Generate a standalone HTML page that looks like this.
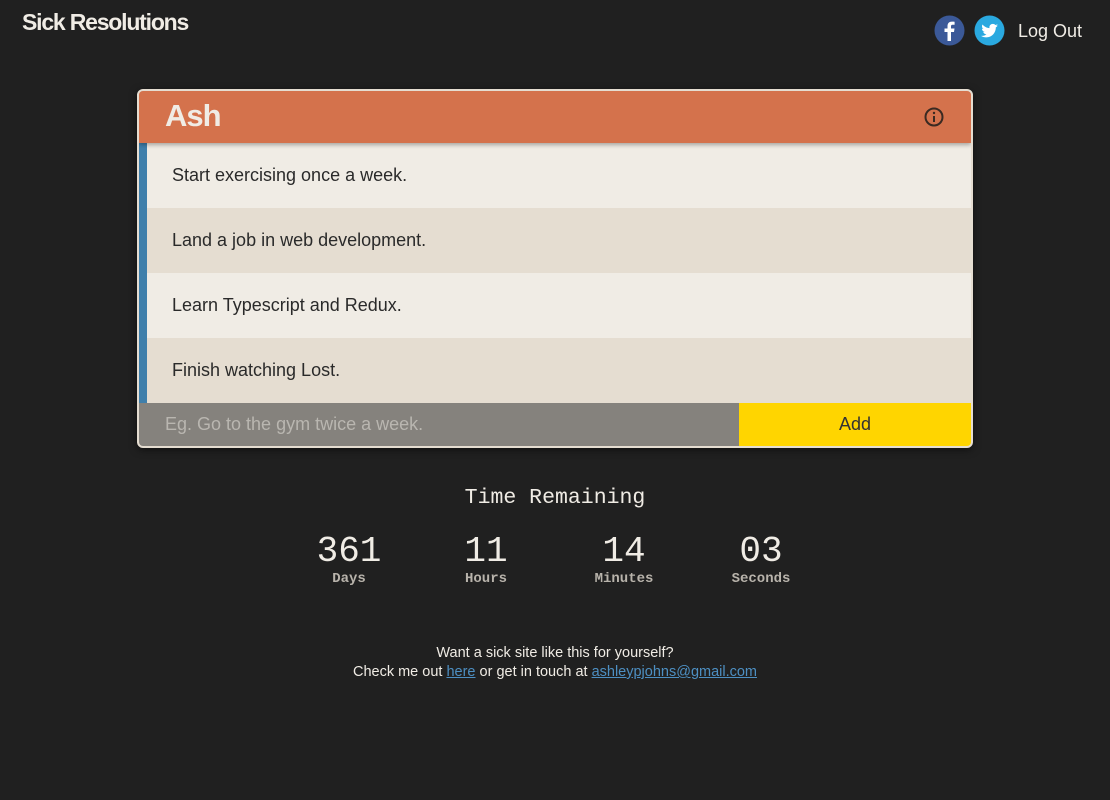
<!DOCTYPE html>
<html><head><style>
body{margin:0;width:1110px;height:800px;background:#202020;font-family:"Liberation Sans",sans-serif;position:relative;overflow:hidden}
.logo{position:absolute;left:22px;top:9px;color:#f0ece5;font:bold 23px "Liberation Sans",sans-serif;letter-spacing:-1.2px}
.card{position:absolute;left:137px;top:89px;width:832px;height:355px;border:2px solid #e5ddd1;border-radius:6px;background:#e5ddd1;overflow:hidden;box-shadow:0 2px 8px rgba(0,0,0,.5)}
.hdr{height:52px;background:#d4724c;position:relative;box-shadow:0 2px 4px rgba(0,0,0,.3);z-index:1}
.hdr .n{position:absolute;left:26px;top:7px;color:#f0ece5;font:bold 31px "Liberation Sans",sans-serif;letter-spacing:-1px}
.list{position:absolute;left:0;top:52px;width:832px;border-left:8px solid #3f7fab;box-sizing:border-box}
.row{height:65px;line-height:64px;padding-left:25px;font-size:18px;color:#2a2a2a}
.a{background:#f0ece5}.b{background:#e5ddd1}
.inp{position:absolute;left:0;top:312px;width:600px;height:43px;background:#85827d;color:#b9b6b0;font-size:18px;line-height:43px;padding-left:26px;box-sizing:border-box}
.add{position:absolute;left:600px;top:312px;width:232px;height:43px;background:#ffd500;color:#333;font-size:18px;line-height:43px;text-align:center}
.tr{position:absolute;top:486px;left:0;width:1110px;text-align:center;color:#f0ece5;font:21.5px "Liberation Mono",monospace}
.c{position:absolute;top:531px;width:140px;margin-left:-70px;text-align:center}
.c .v{color:#f0ece5;font:36px "Liberation Mono",monospace;line-height:42px}
.c .l{color:#b8b3ab;font:bold 14px "Liberation Mono",monospace;margin-top:-2px}
.f{position:absolute;top:644px;width:1110px;text-align:center;color:#f0ece5;font-size:14.5px;line-height:19px}
.f a{color:#4d8fc2;text-decoration:underline}
</style></head><body>
<div class="logo">Sick Resolutions</div>
<svg style="position:absolute;left:934px;top:15px" width="31" height="31"><circle cx="15.5" cy="15.5" r="15" fill="#3b5998"/><path d="M17 26V17h3l.5-3.5H17v-2c0-1 .3-1.7 1.8-1.7h1.8V6.7c-.3 0-1.4-.1-2.7-.1-2.6 0-4.4 1.6-4.4 4.5v2.4h-3V17h3v9z" fill="#fff"/></svg>
<svg style="position:absolute;left:974px;top:15px" width="31" height="31"><circle cx="15.5" cy="15.5" r="15" fill="#2aa9e0"/><path d="M24 10.5c-.6.3-1.3.5-2 .6.7-.4 1.3-1.1 1.5-1.9-.7.4-1.4.7-2.2.8-.6-.7-1.5-1.1-2.5-1.1-1.9 0-3.4 1.5-3.4 3.4 0 .3 0 .5.1.8-2.8-.1-5.3-1.5-7-3.6-.3.5-.5 1.1-.5 1.7 0 1.2.6 2.2 1.5 2.8-.6 0-1.100-.2-1.5-.4 0 1.7 1.2 3 2.7 3.3-.5.2-1 .2-1.5.1.4 1.3 1.7 2.3 3.2 2.4-1.2.9-2.6 1.5-4.2 1.5H7c1.5 1 3.3 1.5 5.2 1.5 6.2 0 9.6-5.2 9.6-9.6v-.4c.9-.6 1.6-1.3 2.2-2.2z" fill="#fff"/></svg>
<div style="position:absolute;left:1018px;top:21px;color:#f0ece5;font-size:18px">Log Out</div>
<div class="card">
<div class="hdr"><div class="n">Ash</div>
<svg style="position:absolute;left:784px;top:15px" width="22" height="22"><circle cx="11" cy="11" r="8.5" fill="none" stroke="#3a2a22" stroke-width="2"/><circle cx="11" cy="7" r="1.2" fill="#3a2a22"/><path d="M11 10v6" stroke="#3a2a22" stroke-width="2"/></svg></div>
<div class="list">
<div class="row a">Start exercising once a week.</div>
<div class="row b">Land a job in web development.</div>
<div class="row a">Learn Typescript and Redux.</div>
<div class="row b">Finish watching Lost.</div>
</div>
<div class="inp">Eg. Go to the gym twice a week.</div>
<div class="add">Add</div>
</div>
<div class="tr">Time Remaining</div>
<div class="c" style="left:349px"><div class="v">361</div><div class="l">Days</div></div>
<div class="c" style="left:486px"><div class="v">11</div><div class="l">Hours</div></div>
<div class="c" style="left:624px"><div class="v">14</div><div class="l">Minutes</div></div>
<div class="c" style="left:761px"><div class="v">03</div><div class="l">Seconds</div></div>
<div class="f">Want a sick site like this for yourself?<br>Check me out <a>here</a> or get in touch at <a>ashleypjohns@gmail.com</a></div>
</body></html>
